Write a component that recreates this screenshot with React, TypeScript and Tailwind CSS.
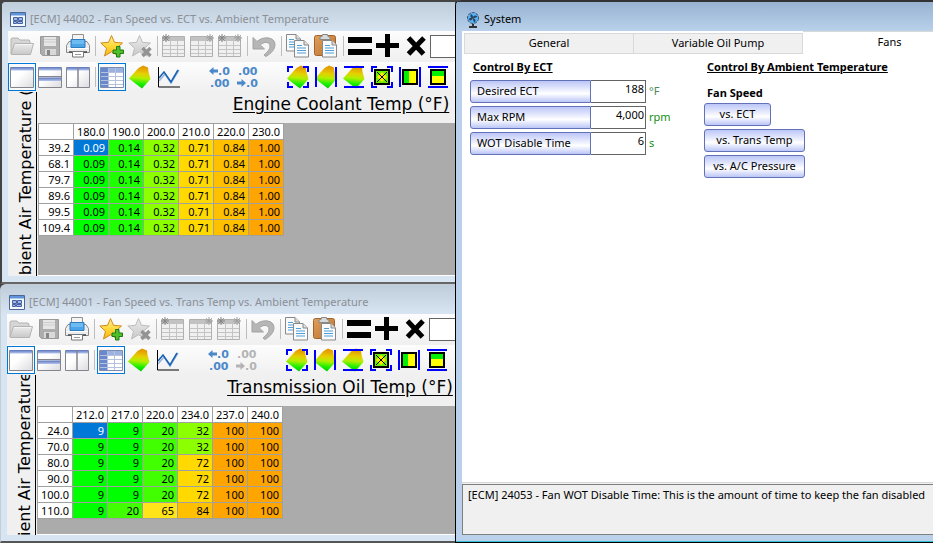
import type { ReactNode } from "react";

type TableData = {
  columns: string[];
  rows: { label: string; cells: string[] }[];
  colors: Record<string, string>;
};

const ectTable: TableData = {
  columns: ["180.0", "190.0", "200.0", "210.0", "220.0", "230.0"],
  rows: ["39.2", "68.1", "79.7", "89.6", "99.5", "109.4"].map((label) => ({
    label,
    cells: ["0.09", "0.14", "0.32", "0.71", "0.84", "1.00"],
  })),
  colors: {
    "0.09": "bg-[#00ff00]",
    "0.14": "bg-[#1eff00]",
    "0.32": "bg-[#8cff00]",
    "0.71": "bg-[#ffd900]",
    "0.84": "bg-[#ffc000]",
    "1.00": "bg-[#ffa500]",
  },
};

const transTable: TableData = {
  columns: ["212.0", "217.0", "220.0", "234.0", "237.0", "240.0"],
  rows: [
    { label: "24.0", cells: ["9", "9", "20", "32", "100", "100"] },
    { label: "70.0", cells: ["9", "9", "20", "32", "100", "100"] },
    { label: "80.0", cells: ["9", "9", "20", "72", "100", "100"] },
    { label: "90.0", cells: ["9", "9", "20", "72", "100", "100"] },
    { label: "100.0", cells: ["9", "9", "20", "72", "100", "100"] },
    { label: "110.0", cells: ["9", "20", "65", "84", "100", "100"] },
  ],
  colors: {
    "9": "bg-[#00ff00]",
    "20": "bg-[#41ff00]",
    "32": "bg-[#8cff00]",
    "65": "bg-[#ffe41a]",
    "72": "bg-[#ffd900]",
    "84": "bg-[#ffc000]",
    "100": "bg-[#ffa500]",
  },
};

/* ---------- Icons ---------- */

const Icon = ({ children }: { children: ReactNode }) => (
  <svg viewBox="0 0 24 24" className="size-6" fill="none" aria-hidden="true">{children}</svg>
);

// Shared gradients for every toolbar icon
const IconDefs = () => (
  <svg className="absolute size-0" aria-hidden="true">
    <defs>
      <linearGradient id="surface" x1="0.6" y1="0" x2="0.5" y2="1">
        <stop offset="0.08" stopColor="#e59a00" />
        <stop offset="0.35" stopColor="#e6cf00" />
        <stop offset="0.55" stopColor="#b4ee00" />
        <stop offset="0.8" stopColor="#17f000" />
        <stop offset="1" stopColor="#00c800" />
      </linearGradient>
      <linearGradient id="gold" x1="0" y1="0" x2="0" y2="1">
        <stop offset="0" stopColor="#fff2a0" />
        <stop offset="0.5" stopColor="#ffd83a" />
        <stop offset="1" stopColor="#f9b411" />
      </linearGradient>
      <linearGradient id="silver" x1="0" y1="0" x2="0" y2="1">
        <stop offset="0" stopColor="#ececec" />
        <stop offset="1" stopColor="#c8c8c8" />
      </linearGradient>
      <linearGradient id="pane" x1="0" y1="0" x2="1" y2="1">
        <stop offset="0.4" stopColor="#ffffff" />
        <stop offset="1" stopColor="#dcdce0" />
      </linearGradient>
      <linearGradient id="paneBar" x1="0" y1="0" x2="0" y2="1">
        <stop offset="0" stopColor="#5b74b8" />
        <stop offset="1" stopColor="#b3c4f0" />
      </linearGradient>
      <linearGradient id="board" x1="0" y1="0" x2="1" y2="1">
        <stop offset="0" stopColor="#e0a05c" />
        <stop offset="1" stopColor="#b8702c" />
      </linearGradient>
    </defs>
  </svg>
);

const OpenIcon = () => (
  <Icon>
    <path d="M1 20V5l1-1h6l2 2h9l1 1v3" fill="#d6d6d6" stroke="#b4b4b4" />
    <path d="M1 20 4.500 9.500H23.500L20.500 20.500H2z" fill="url(#silver)" stroke="#b4b4b4" />
    <path d="M5.500 10.500H22" stroke="#f4f4f4" />
  </Icon>
);

const SaveIcon = () => (
  <Icon>
    <path d="M2.500 2.500h19v19H4.500l-2-2z" fill="#adadad" stroke="#999" />
    <path d="M6 3h12v9H6z" fill="#e6e6e6" />
    <path d="M6 5.500h12M6 8h12" stroke="#cdcdcd" />
    <path d="M7 15h11v6H7z" fill="#d9d9d9" />
    <path d="M9 16h3v5H9z" fill="#878787" />
  </Icon>
);

const PrintIcon = () => (
  <Icon>
    <path d="M6.500.5h11v8h-11z" fill="#f4f4f4" stroke="#909090" />
    <path d="M3 7.500h18l2.500 4v7h-23v-7z" fill="#ececec" stroke="#8a8a8a" />
    <path d="M5 5.500h14v8H5z" fill="#4aa6e8" stroke="#2e7dc0" />
    <path d="M6 7h12M6 9h12" stroke="#8fd0fa" />
    <path d="M1 14.500h22" stroke="#fff" />
    <path d="M3 18h18" stroke="#444" strokeWidth="1.500" />
    <path d="M6.500 17.500h11v5.500h-11z" fill="#fff" stroke="#777" />
    <path d="M9 20.500h6" stroke="#999" />
  </Icon>
);

const starPath = "M11.500 1.500 14.500 8.300 22.500 9 16.500 14.200 18.500 22 11.500 17.800 4.500 22 6.500 14.200.8 9 8.600 8.300z";

const FavoriteAddIcon = () => (
  <Icon>
    <path d={starPath} fill="url(#gold)" stroke="#d08a1c" strokeLinejoin="round" />
    <path d="M16.500 12.500h3.500v3.500h3.500v3.500h-3.500v3.500h-3.500v-3.500H13V16h3.500z" fill="#4fc02a" stroke="#1f7a14" />
  </Icon>
);

const FavoriteRemoveIcon = () => (
  <Icon>
    <path d={starPath} fill="url(#silver)" stroke="#bcbcbc" strokeLinejoin="round" />
    <path d="m14.500 14 8 8m0-8-8 8" stroke="#939393" strokeWidth="3.500" />
  </Icon>
);

const GridIcon = ({ left, right }: { left?: boolean; right?: boolean }) => (
  <Icon>
    <path d="M.5 2.500h22v20H.5z" fill="#f0f0f0" stroke="#b0b0b0" />
    <path d="M1 3h21v4H1z" fill="#c2c2c2" />
    <path d="M1 11.500h21M1 15.500h21M1 19.500h21M8.500 7v15M15.500 7v15" stroke="#c4c4c4" />
    {left && <path d="M4 0v8M0 4h8M1.200 1.200l5.600 5.600M6.800 1.200 1.200 6.800" stroke="#858585" />}
    {right && <path d="M20 0v8M16 4h8M17.200 1.200l5.600 5.600M22.800 1.200l-5.600 5.600" stroke="#a0a0a0" />}
  </Icon>
);

const UndoIcon = () => (
  <Icon>
    <path
      d="M1 3.500V15h11.500L8.300 11c3-3.500 9.700-3.500 9.700 1 0 3.500-3 6.500-6 9l2 1.500c5-3 9-7 9-12 0-7.500-11.500-9-18-3z"
      fill="#b6b6b6"
      stroke="#a2a2a2"
      strokeLinejoin="round"
    />
  </Icon>
);

const Page = ({ x, y }: { x: number; y: number }) => (
  <g transform={`translate(${x} ${y})`}>
    <path d="M.5.5h9.500l4.500 4.500v12H.5z" fill="#fafafa" stroke="#888" />
    <path d="M10 .5V5h4.500" fill="#ddd" stroke="#888" />
    <path d="M3 5.500h5M3 8h9M3 10.500h9M3 13h9" stroke="#4d9fdc" />
  </g>
);

const CopyIcon = () => (
  <Icon>
    <Page x={0} y={0} />
    <Page x={8} y={6} />
  </Icon>
);

const PasteIcon = () => (
  <Icon>
    <rect x="0.500" y="1.500" width="21" height="20" rx="2" fill="url(#board)" stroke="#a4622a" />
    <path d="M6 5.500V3l2-.5.500-2h5l.5 2 2 .5v2.500z" fill="#d8d8d8" stroke="#888" />
    <Page x={8} y={6} />
  </Icon>
);

const EqualsIcon = () => (
  <Icon><path d="M0 3h24v6H0zM0 15h24v6H0z" fill="#000" /></Icon>
);

const PlusIcon = () => (
  <Icon><path d="M11.500 0v23M0 11.500h23" stroke="#000" strokeWidth="5" /></Icon>
);

const TimesIcon = () => (
  <Icon><path d="m4.500 4 15 16M20 4 4.500 20" stroke="#000" strokeWidth="5" /></Icon>
);

const PaneIcon = ({ kind }: { kind: "single" | "rows" | "columns" }) => (
  <Icon>
    <path d="M.5 2.500h23v20H.5z" fill="url(#pane)" stroke="#85858d" />
    <path d="M1 2h22v3.500H1z" fill="url(#paneBar)" />
    {kind === "rows" && (
      <>
        <path d="M1 12.500h22V16H1z" fill="url(#paneBar)" />
        <path d="M0 11.500h24" stroke="#85858d" />
      </>
    )}
    {kind === "columns" && <path d="M12 2v21" stroke="#85858d" strokeWidth="1.500" />}
  </Icon>
);

const TableViewIcon = () => (
  <Icon>
    <path d="M.5 2.500h23v20H.5z" fill="#fff" stroke="#7c8cb0" />
    <path d="M1 3h22v4H1z" fill="#9cb2e0" />
    <path d="M1 3h7v19H1z" fill="#6a88cc" />
    <path d="M1 7.500h22M1 11.500h22M1 15.500h22M1 19.500h22M8.500 3v19M15.500 3v19" stroke="#b4c2de" />
  </Icon>
);

const surfacePath = "M10.500 3 15 .5 20 2.500 20.500 7 22.500 14 14 23.500 8 19 1 13.500z";

const SurfaceIcon = ({ frame }: { frame?: string }) => (
  <Icon>
    <path d={surfacePath} fill="url(#surface)" />
    {frame && <path d={frame} stroke="#0000ff" strokeWidth="2" />}
  </Icon>
);

const cornersFrame = "M2 7V2h5M17 2h5v5M22 17v5h-5M7 22H2v-5";
const sidesFrame = "M2 2v20M22 2v20";
const capsFrame = "M2 2h20M2 22h20";

const ChartIcon = () => (
  <Icon>
    <path d="M3 16 9 9l6 9 8-13" stroke="#9ab4dc" strokeWidth="1.500" />
    <path d="m3 13 5-6 7 10 7-12" stroke="#1763b5" strokeWidth="1.500" />
    <path d="M2.500 2v20H24" stroke="#000" />
  </Icon>
);

const DecimalsIcon = ({ more, disabled }: { more?: boolean; disabled?: boolean }) => (
  <svg viewBox="0 0 26 24" className={disabled ? "w-[26px] h-6 text-[#b4b4b4]" : "w-[26px] h-6 text-[#4a88ca]"} aria-hidden="true">
    <g fill="currentColor" className="font-['DejaVu_Sans'] text-[11px] font-bold">
      <text x={more ? 3 : 11} y="10">{more ? ".00" : ".0"}</text>
      <text x={more ? 11 : 3} y="22">{more ? ".0" : ".00"}</text>
    </g>
    {more ? (
      <path d="M2 16.500h4.500V14l4.500 4-4.500 4v-2.500H2z" fill="currentColor" />
    ) : (
      <path d="M11 4.500H6.500V2L2 6l4.500 4V7.500H11z" fill="currentColor" />
    )}
  </svg>
);

const FitIcon = ({ kind }: { kind: "all" | "width" | "height" }) => (
  <Icon>
    <path d={kind === "all" ? cornersFrame : kind === "width" ? sidesFrame : capsFrame} stroke="#0000ff" strokeWidth="2" />
    <path d="M5 5h14v14H5z" fill="#ffff00" />
    {kind === "all" && <path d="M5 5h14v14H5z" fill="#6cf000" />}
    {kind === "all" && <path d="m12 7 5 5-5 5-5-5z" fill="#ffe800" />}
    {kind === "all" && <path d="m7 7 10 10M17 7 7 17" stroke="#000" />}
    {kind === "width" && <path d="M5 5h6v14H5z" fill="#00f000" />}
    {kind === "height" && <path d="M5 5h14v6H5z" fill="#00f000" />}
    <path d="M5 5h14v14H5z" stroke="#000" strokeWidth="2" />
  </Icon>
);

const FormIcon = () => (
  <svg viewBox="0 0 16 16" className="size-4" aria-hidden="true">
    <path d="M.5.5h15v14H.5z" fill="#f4f8ff" stroke="#4d6694" />
    <path d="M1 1h14v2.500H1z" fill="#5f93dc" />
    <path d="M3.500 5.500h4v3h-4zM8.500 5.500h4v3h-4zM3.500 9.500h3v2h-3zM7.500 9.500h5v2h-5z" fill="#9ebaf4" stroke="#46629c" />
  </svg>
);

const FanIcon = () => (
  <svg viewBox="0 0 14 16" className="h-4 w-3.5" aria-hidden="true">
    <circle cx="7" cy="6" r="5.500" fill="#5ab4f8" stroke="#3c5064" strokeDasharray="3 1" />
    <path d="M7 6C4 6 4 3.500 5 2c2 1 2 2 2 4zM7 6c0-3 3-3 4.500-1.500C10 6 9 6 7 6zM7 6c3 1 3 3 1.500 4.500C7 9 7 8 7 6zM7 6c-1 3-3 3-4.500 1C4 6 5 5.500 7 6z" fill="#2c4660" />
    <path d="M7 12v2M3 15h8" stroke="#333" strokeWidth="2" />
  </svg>
);

/* ---------- Toolbar ---------- */

interface ToolButtonProps {
  label: string;
  active?: boolean;
  disabled?: boolean;
  children: ReactNode;
}

const ToolButton = ({ label, active, disabled, children }: ToolButtonProps) => (
  <button
    aria-label={label}
    disabled={disabled}
    className={`flex size-7 shrink-0 items-center justify-center border ${active ? "border-[#0078d7] bg-[#fafafa]" : "border-transparent"}`}
  >
    {children}
  </button>
);

const Separator = () => (
  <div className="flex w-1.5 shrink-0 justify-center"><div className="h-5 w-px bg-[#bdbdbd]" /></div>
);

const Toolbar = ({ id, canAddDecimals }: { id: string; canAddDecimals: boolean }) => (
  <div>
    <div className="flex h-[30px] items-center bg-linear-to-b from-[#fdfdfd] to-[#f0f0f0]">
      <ToolButton label="Open" disabled><OpenIcon /></ToolButton>
      <ToolButton label="Save" disabled><SaveIcon /></ToolButton>
      <ToolButton label="Print"><PrintIcon /></ToolButton>
      <Separator />
      <ToolButton label="Add favorite"><FavoriteAddIcon /></ToolButton>
      <ToolButton label="Remove favorite" disabled><FavoriteRemoveIcon /></ToolButton>
      <Separator />
      <ToolButton label="Edit column axis" disabled><GridIcon left /></ToolButton>
      <ToolButton label="Edit row axis" disabled><GridIcon right /></ToolButton>
      <ToolButton label="Edit both axes" disabled><GridIcon left right /></ToolButton>
      <Separator />
      <ToolButton label="Undo" disabled><UndoIcon /></ToolButton>
      <Separator />
      <ToolButton label="Copy"><CopyIcon /></ToolButton>
      <ToolButton label="Paste"><PasteIcon /></ToolButton>
      <Separator />
      <ToolButton label="Set value"><EqualsIcon /></ToolButton>
      <ToolButton label="Add value"><PlusIcon /></ToolButton>
      <ToolButton label="Multiply by value"><TimesIcon /></ToolButton>
      <input id={id} aria-label="Value" className="h-[23px] w-16 shrink-0 border border-[#646464] bg-white px-1" />
    </div>
    <div className="mt-px flex h-[30px] items-center bg-linear-to-b from-[#fdfdfd] to-[#f0f0f0]">
      <ToolButton label="Single view" active><PaneIcon kind="single" /></ToolButton>
      <ToolButton label="Stacked view"><PaneIcon kind="rows" /></ToolButton>
      <ToolButton label="Side by side view"><PaneIcon kind="columns" /></ToolButton>
      <Separator />
      <ToolButton label="Table" active><TableViewIcon /></ToolButton>
      <ToolButton label="Surface"><SurfaceIcon /></ToolButton>
      <ToolButton label="Chart"><ChartIcon /></ToolButton>
      <div className="ml-6 flex">
        <ToolButton label="More decimals"><DecimalsIcon /></ToolButton>
        <ToolButton label="Fewer decimals" disabled={!canAddDecimals}><DecimalsIcon more disabled={!canAddDecimals} /></ToolButton>
      </div>
      <div className="ml-[22px] flex">
        <ToolButton label="Fit surface"><SurfaceIcon frame={cornersFrame} /></ToolButton>
        <ToolButton label="Fit surface width"><SurfaceIcon frame={sidesFrame} /></ToolButton>
        <ToolButton label="Fit surface height"><SurfaceIcon frame={capsFrame} /></ToolButton>
        <ToolButton label="Fit table"><FitIcon kind="all" /></ToolButton>
        <ToolButton label="Fit table width"><FitIcon kind="width" /></ToolButton>
        <ToolButton label="Fit table height"><FitIcon kind="height" /></ToolButton>
      </div>
    </div>
  </div>
);

/* ---------- Table editor window ---------- */

const DataTable = ({ data }: { data: TableData }) => (
  <table className="w-[246px] table-fixed border-separate border-spacing-0 border-t border-l border-[#a0a0a0] text-right text-[11px] leading-[15px]">
    <thead>
      <tr>
        <td className="border-r border-b border-[#a0a0a0] bg-white" />
        {data.columns.map((column) => (
          <th key={column} scope="col" className="border-r border-b border-[#a0a0a0] bg-white p-0 pr-[3px] text-right font-normal">{column}</th>
        ))}
      </tr>
    </thead>
    <tbody>
      {data.rows.map((row, r) => (
        <tr key={row.label}>
          <th scope="row" className="border-r border-b border-[#a0a0a0] bg-white p-0 pr-[3px] text-right font-normal">{row.label}</th>
          {row.cells.map((cell, c) => (
            <td
              key={c}
              className={`border-r border-b border-[#a0a0a0] p-0 pr-[3px] ${r === 0 && c === 0 ? "bg-[#0078d7] text-white" : data.colors[cell]}`}
            >
              {cell}
            </td>
          ))}
        </tr>
      ))}
    </tbody>
  </table>
);

interface TableWindowProps {
  id: string;
  title: string;
  axisTitle: string;
  data: TableData;
  canAddDecimals: boolean;
  className: string;
}

const TableWindow = ({ id, title, axisTitle, data, canAddDecimals, className }: TableWindowProps) => (
  <section className={`flex min-w-0 flex-col overflow-hidden rounded-tl-md bg-[#d7e4f2] pb-[6px] ${className}`}>
    <header className="flex h-[29px] shrink-0 items-center gap-1 bg-linear-to-b from-[#bfcddb] to-[#d7e4f2] pl-2 pt-1.5">
      <FormIcon />
      <h2 className="whitespace-nowrap text-[11px] text-[#8b8f96]">{title}</h2>
    </header>
    <div className="ml-1.5 flex grow flex-col bg-[#f0f0f0]">
      <Toolbar id={id} canAddDecimals={canAddDecimals} />
      <div className="flex grow">
        <div className="flex h-0 min-h-full w-[30px] shrink-0 items-center justify-end overflow-hidden pr-1">
          <span className="rotate-180 whitespace-nowrap font-['DejaVu_Sans'] text-[16px] leading-4 underline underline-offset-2 [writing-mode:vertical-rl]">
            Ambient Air Temperature (°F)
          </span>
        </div>
        <div className="flex min-w-0 grow flex-col overflow-hidden">
          <h3 className="h-[31px] w-[606px] pt-0.5 text-center font-['DejaVu_Sans'] text-[17px] leading-5 underline underline-offset-2">{axisTitle}</h3>
          <div className="grow border-b border-white bg-[#ababab]">
            <DataTable data={data} />
          </div>
        </div>
      </div>
    </div>
  </section>
);

/* ---------- System window ---------- */

const fields = [
  { id: "desired-ect", label: "Desired ECT", value: "188", unit: "°F", unitClass: "text-[#4d8a5a]" },
  { id: "max-rpm", label: "Max RPM", value: "4,000", unit: "rpm", unitClass: "text-[#109010]" },
  { id: "wot-disable", label: "WOT Disable Time", value: "6", unit: "s", unitClass: "text-[#109010]" },
];

const SystemWindow = () => (
  <section className="flex min-w-0 flex-col overflow-hidden rounded-tl-md border-b border-l border-black bg-[#b9d1ea]">
    <header className="flex h-[31px] shrink-0 items-center gap-1 border-t-2 border-[#333] bg-linear-to-b from-[#98b3d2] to-[#b9d1ea] pl-2.5 pt-1.5">
      <FanIcon />
      <h2 className="text-[11px]">System</h2>
    </header>
    <div className="ml-1.5 flex grow flex-col bg-white">
      <div role="tablist" className="flex h-[23px] items-end overflow-hidden pl-0.5 text-[11px]">
        <button role="tab" aria-selected="false" className="h-[21px] w-[170px] shrink-0 border border-[#d9d9d9] bg-[#f0f0f0]">General</button>
        <button role="tab" aria-selected="false" className="h-[21px] w-[169px] shrink-0 border border-l-0 border-[#d9d9d9] bg-[#f0f0f0]">Variable Oil Pump</button>
        <button role="tab" aria-selected="true" className="h-[23px] w-[173px] shrink-0 border-t border-[#d9d9d9] bg-white pb-0.5">Fans</button>
      </div>
      <div className="flex grow pl-2 pt-1 text-[11px]">
        <div className="w-[234px] shrink-0">
          <h3 className="pl-[3px] font-bold leading-[18px] underline">Control By ECT</h3>
          <div className="mt-1 flex flex-col gap-[3px]">
            {fields.map((field) => (
              <div key={field.id} className="flex h-[23px]">
                <label
                  htmlFor={field.id}
                  className="flex w-[121px] items-center rounded-l-[3px] border border-[#6272b8] bg-linear-to-b from-[#bcc6f6] via-white via-60% to-[#bcc6f6] pl-1.5"
                >
                  {field.label}
                </label>
                <input
                  id={field.id}
                  defaultValue={field.value}
                  className="w-[55px] border border-l-0 border-[#646464] bg-white pb-1 pr-px text-right"
                />
                <span className={`self-center pl-[3px] ${field.unitClass}`}>{field.unit}</span>
              </div>
            ))}
          </div>
        </div>
        <div className="shrink-0">
          <h3 className="whitespace-nowrap pl-[3px] font-bold leading-[18px] underline">Control By Ambient Temperature</h3>
          <h4 className="mt-2 pl-[3px] font-bold leading-[18px]">Fan Speed</h4>
          <div className="mt-px flex flex-col items-start gap-[3px]">
            <button className="h-[23px] w-[67px] rounded-[3px] border border-[#6272b8] bg-linear-to-b from-[#bcc6f6] via-white via-60% to-[#bcc6f6]">vs. ECT</button>
            <button className="h-[23px] w-[101px] rounded-[3px] border border-[#6272b8] bg-linear-to-b from-[#bcc6f6] via-white via-60% to-[#bcc6f6]">vs. Trans Temp</button>
            <button className="h-[23px] w-[101px] rounded-[3px] border border-[#6272b8] bg-linear-to-b from-[#bcc6f6] via-white via-60% to-[#bcc6f6]">vs. A/C Pressure</button>
          </div>
        </div>
      </div>
      <div className="h-0.5 border-t border-[#d9d9d9] bg-[#f0f0f0]" />
      <p className="h-[51px] overflow-hidden whitespace-nowrap border border-r-0 border-[#7f7f7f] bg-[#f0f0f0] pl-[5px] pt-px text-[11px] leading-[18px]">
        [ECM] 24053 - Fan WOT Disable Time: This is the amount of time to keep the fan disabled
      </p>
    </div>
    <div className="h-[7px] border-b border-[#35c0d8]" />
  </section>
);

export default function App() {
  return (
    <main className="grid min-h-screen grid-cols-[455fr_478fr] overflow-hidden bg-[#444] font-['Noto_Sans',sans-serif] text-black">
      <IconDefs />
      <div className="grid min-w-0 grid-rows-[284fr_259fr]">
        <TableWindow
          id="ect-value"
          className="border-y-2 border-b-[#666] border-l-2 border-[#444]"
          title="[ECM] 44002 - Fan Speed vs. ECT vs. Ambient Temperature"
          axisTitle="Engine Coolant Temp (°F)"
          data={ectTable}
          canAddDecimals
        />
        <TableWindow
          id="trans-value"
          className="border-t border-b-2 border-b-[#555] border-l border-[#c4ccd6]"
          title="[ECM] 44001 - Fan Speed vs. Trans Temp vs. Ambient Temperature"
          axisTitle="Transmission Oil Temp (°F)"
          data={transTable}
          canAddDecimals={false}
        />
      </div>
      <SystemWindow />
    </main>
  );
}
